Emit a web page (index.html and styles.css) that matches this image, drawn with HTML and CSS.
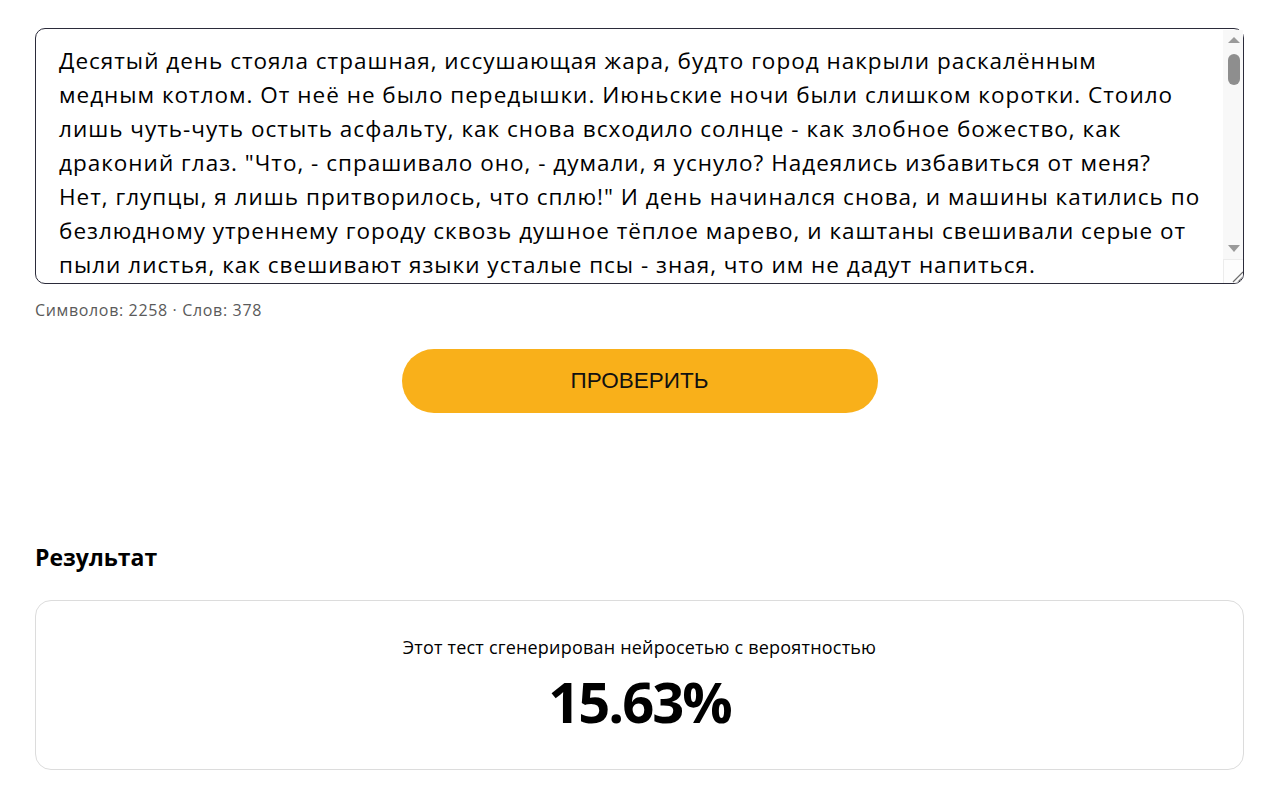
FILE: index.html
```html
<!DOCTYPE html>
<html lang="ru">
<head>
<meta charset="utf-8">
<title>Проверка текста</title>
<link rel="stylesheet" href="styles.css">
</head>
<body>
<main class="page">
  <section class="input-block">
    <div class="textarea-wrap">
      <textarea class="text-input" spellcheck="false">Десятый день стояла страшная, иссушающая жара, будто город накрыли раскалённым
медным котлом. От неё не было передышки. Июньские ночи были слишком коротки. Стоило
лишь чуть-чуть остыть асфальту, как снова всходило солнце - как злобное божество, как
драконий глаз. "Что, - спрашивало оно, - думали, я уснуло? Надеялись избавиться от меня?
Нет, глупцы, я лишь притворилось, что сплю!" И день начинался снова, и машины катились по
безлюдному утреннему городу сквозь душное тёплое марево, и каштаны свешивали серые от
пыли листья, как свешивают языки усталые псы - зная, что им не дадут напиться.
Люди прятались по домам, задёргивали шторы, включали вентиляторы и кондиционеры,
но даже в самых прохладных комнатах воздух казался густым и вязким, как кисель.
По вечерам во дворах собирались старики, сидели на скамейках под чахлыми тополями
и говорили, что такого лета не помнят даже их деды. Дети перестали выходить
на площадки: горки раскалялись так, что к ним невозможно было прикоснуться,
а песок в песочницах обжигал ладони.
Фонтаны на главной площади давно пересохли, и голуби, растрёпанные и злые,
бродили по их сухому дну в поисках хоть капли воды. Продавцы мороженого сбились
с ног, а потом и вовсе закрыли свои киоски - холодильники не справлялись.
Над рекой висел тяжёлый туман, и вода в ней стала тёплой и мутной, как в забытой
на солнце кастрюле.
Газеты писали о рекордах, телевизор обещал дожди на следующей неделе, но неделя
проходила за неделей, а небо оставалось всё таким же белёсым и пустым. Только
по ночам, когда город ненадолго затихал, откуда-то издалека доносились глухие
раскаты, и все, кто не спал, замирали у окон, надеясь услышать первые капли
по жестяным подоконникам. Но гроза проходила стороной, и утром снова вставало
солнце.</textarea>
      <div class="scrollbar" aria-hidden="true">
        <span class="arrow arrow-up"></span>
        <span class="thumb"></span>
        <span class="track-fill"></span>
        <span class="arrow arrow-down"></span>
      </div>
      <div class="resizer" aria-hidden="true">
        <svg width="20" height="23" viewBox="0 0 20 23">
          <line x1="9" y1="22" x2="19" y2="12" stroke="#6b6b6b" stroke-width="1.2"/>
          <line x1="14" y1="22" x2="19" y2="17" stroke="#6b6b6b" stroke-width="1.2"/>
        </svg>
      </div>
    </div>
    <div class="counter">Символов: 2258 · Слов: 378</div>
  </section>

  <div class="actions">
    <button class="check-btn" type="button">ПРОВЕРИТЬ</button>
  </div>

  <section class="result">
    <h2 class="result-title">Результат</h2>
    <div class="result-card">
      <p class="result-label">Этот тест сгенерирован нейросетью с вероятностью</p>
      <p class="result-value">15.63%</p>
    </div>
  </section>
</main>
</body>
</html>
```

FILE: styles.css
```css
* { box-sizing: border-box; }

html, body {
  margin: 0;
  padding: 0;
  background: #ffffff;
}

body {
  font-family: "Open Sans", "Noto Sans", sans-serif;
  color: #000;
}

.page {
  padding: 28px 36px 0 35px;
}

.input-block {
  display: flex;
  flex-direction: column;
}

.textarea-wrap {
  position: relative;
}

.text-input {
  display: block;
  width: 100%;
  height: 256px;
  padding: 15px 30px 0 23px;
  border: 1px solid #2b2b3a;
  border-radius: 10px;
  font-family: "Open Sans", "Noto Sans", sans-serif;
  font-size: 22.5px;
  letter-spacing: 1px;
  line-height: 34px;
  color: #000;
  background: #fff;
  resize: none;
  outline: none;
  overflow: hidden;
}

.scrollbar {
  position: absolute;
  top: 2px;
  right: 1px;
  bottom: 25px;
  width: 20px;
  background: #f8f8f8;
  display: flex;
  flex-direction: column;
  align-items: center;
  padding: 7px 0 7px 1px;
}

.arrow {
  width: 0;
  height: 0;
  border-left: 6px solid transparent;
  border-right: 6px solid transparent;
}

.arrow-up {
  border-bottom: 6px solid #9a9a9a;
}

.arrow-down {
  border-top: 7px solid #9a9a9a;
}

.thumb {
  margin-top: 11px;
  width: 12px;
  height: 31px;
  border-radius: 6px;
  background: #8e8e8e;
}

.track-fill {
  flex: 1;
}

.resizer {
  position: absolute;
  right: 1px;
  bottom: 1px;
  width: 20px;
  height: 24px;
  background: #fdfdfd;
  border-top: 1px solid #ececec;
  border-left: 1px solid #ececec;
  border-bottom-right-radius: 9px;
  overflow: hidden;
}

.resizer svg {
  display: block;
}

.counter {
  margin-top: 16px;
  font-size: 16px;
  letter-spacing: 0.65px;
  line-height: 20px;
  color: #5a5a5a;
}

.actions {
  display: flex;
  justify-content: center;
  padding-top: 29px;
}

.check-btn {
  width: 476px;
  height: 64px;
  border: none;
  border-radius: 32px;
  background: #f9b01a;
  font-family: "Liberation Sans", Arial, sans-serif;
  font-size: 22.5px;
  color: #111;
  cursor: pointer;
}

.result {
  padding-top: 128px;
}

.result-title {
  margin: 0;
  font-size: 23px;
  line-height: 32px;
  font-weight: 700;
}

.result-card {
  margin-top: 27px;
  height: 170px;
  border: 1px solid #dcdcdc;
  border-radius: 16px;
  display: flex;
  flex-direction: column;
  align-items: center;
  padding-top: 34px;
}

.result-label {
  margin: 0;
  font-size: 18px;
  letter-spacing: 0.2px;
  line-height: 24px;
}

.result-value {
  margin: 10px 0 0;
  font-size: 56px;
  line-height: 64px;
  font-weight: 700;
  letter-spacing: -2px;
}
```
